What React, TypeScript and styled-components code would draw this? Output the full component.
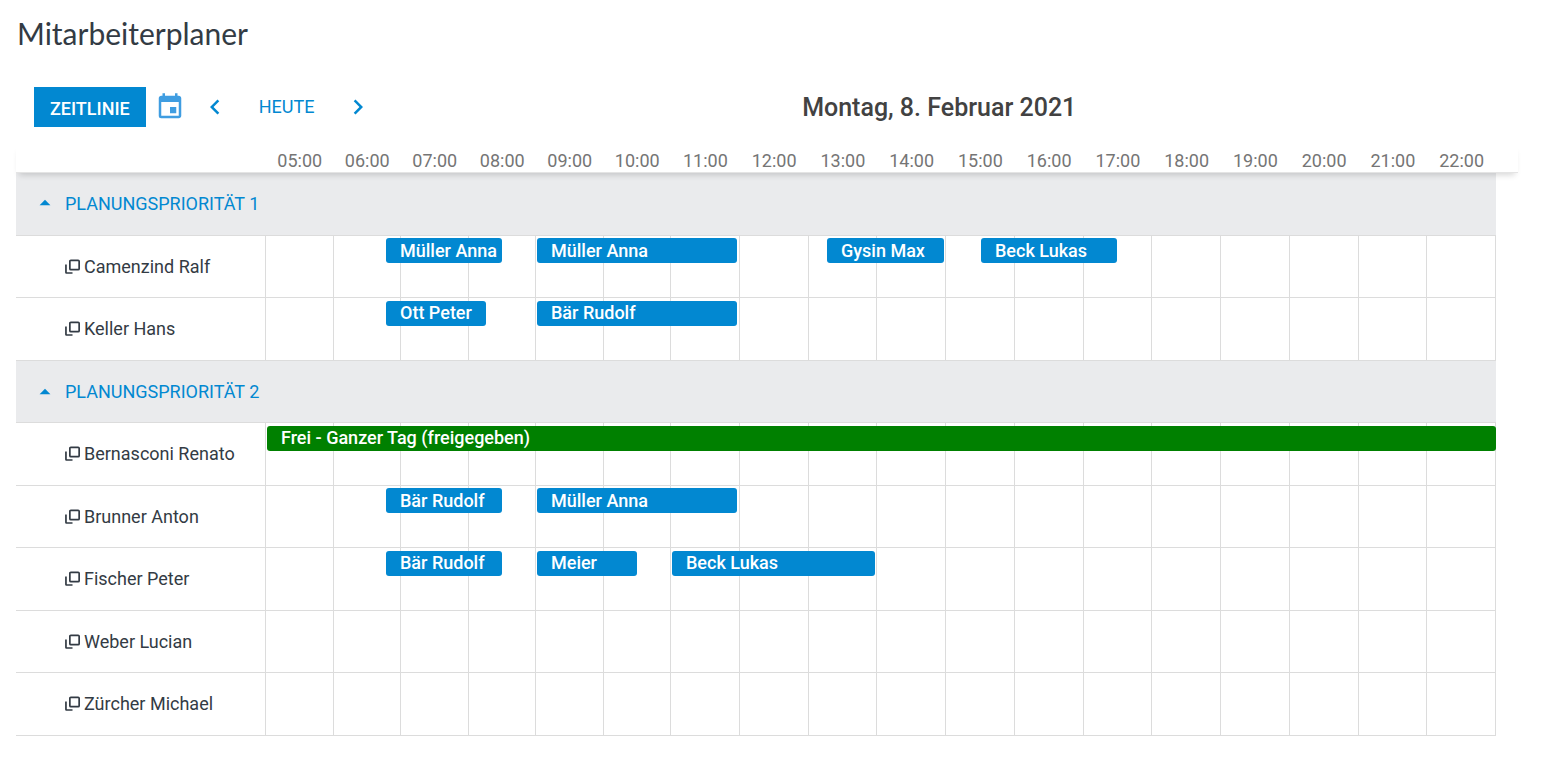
import React from 'react';
import styled, { createGlobalStyle } from 'styled-components';
import { MdEvent, MdChevronLeft, MdChevronRight, MdArrowDropUp } from 'react-icons/md';

const BLUE = '#0288d1';
const LINE = '#dcdcdc';

/* Events are placed on a track of this many units, drawn across all hours. */
const TRACK = 1230;

const GlobalStyle = createGlobalStyle`
  * { box-sizing: border-box; }
  body {
    margin: 0;
    background: #fff;
    color: #333b44;
    font-family: Roboto, "Liberation Sans", sans-serif;
    font-size: 18px;
  }
`;

const Page = styled.main`
  padding: 12px 23px 46px 16px;
`;

const Title = styled.h1`
  margin: 0;
  padding-left: 1px;
  font-family: Lato, "Open Sans", sans-serif;
  font-size: 30px;
  font-weight: 400;
  line-height: 42px;
`;

const Toolbar = styled.div`
  display: flex;
  align-items: center;
  padding: 33px 16px 17px 18px;
`;

const ViewButton = styled.button`
  height: 40px;
  padding: 3px 16px 0;
  border: 0;
  background: ${BLUE};
  color: #fff;
  font: 500 18px Roboto, sans-serif;
  cursor: pointer;
`;

const IconButton = styled.button<{ $tone?: string }>`
  display: flex;
  padding: 0;
  border: 0;
  background: none;
  color: ${(p) => p.$tone ?? BLUE};
  font-size: 30px;
  cursor: pointer;
`;

const Stepper = styled.div`
  display: flex;
  align-items: center;
  gap: 29px;
  margin: 0 3px 0 15px;
`;

const TodayButton = styled.button`
  padding: 0 0 2px;
  border: 0;
  background: none;
  color: ${BLUE};
  font: 400 18px Roboto, sans-serif;
  cursor: pointer;
`;

const PickerSlot = styled.div`
  padding-left: 9px;
`;

const DateHeading = styled.h2`
  flex: 1;
  margin: 0;
  padding-top: 2px;
  color: #424242;
  font-size: 25px;
  font-weight: 500;
  line-height: 38px;
  text-align: center;
`;

const Planner = styled.table`
  display: block;
  width: 100%;
`;

const Head = styled.thead`
  display: block;
  position: relative;
  z-index: 1;
  background: #fff;
  box-shadow: 0 5px 6px -3px rgba(0, 0, 0, 0.16);
`;

const columns = '250px repeat(6, 54fr) repeat(12, 55fr)';

const HeadRow = styled.tr`
  display: grid;
  grid-template-columns: ${columns} 22px;
  height: 29px;
  border-bottom: 1px solid #e4e4e4;
`;

const HourCell = styled.th`
  padding: 0;
  color: #757575;
  font-weight: 400;
  line-height: 34px;
  text-align: center;
`;

const Body = styled.tbody`
  display: block;
  margin-right: 22px;
`;

const Row = styled.tr`
  display: grid;
  grid-template-columns: ${columns};
  position: relative;
  height: 62px;
  --event-top: 2px;
  --event-line: 25px;

  &:nth-child(odd) {
    height: 63px;
    --event-top: 3px;
    --event-line: 23px;
  }

  &:nth-child(odd) > th {
    padding-bottom: 2px;
  }
`;

const GroupCell = styled.th`
  grid-column: 1 / -1;
  padding: 0 0 0 16px;
  border-bottom: 1px solid ${LINE};
  background: #eaebed;
  text-align: left;
`;

const GroupToggle = styled.button`
  display: flex;
  align-items: center;
  gap: 7px;
  height: 100%;
  padding: 0;
  border: 0;
  background: none;
  color: ${BLUE};
  font: 400 18px Roboto, sans-serif;
  cursor: pointer;

  svg { font-size: 26px; }
`;

const NameCell = styled.th`
  display: flex;
  align-items: center;
  gap: 4px;
  padding: 0 0 0 49px;
  border-right: 1px solid ${LINE};
  border-bottom: 1px solid ${LINE};
  font-weight: 400;
`;

const SlotCell = styled.td`
  padding: 0;
  border-right: 1px solid ${LINE};
  border-bottom: 1px solid ${LINE};
`;

const Track = styled.td`
  position: absolute;
  top: var(--event-top);
  right: 0;
  left: 250px;
  height: 25px;
  padding: 0;
`;

const Event = styled.div<{ $free?: boolean }>`
  position: absolute;
  height: 25px;
  padding-left: 14px;
  overflow: hidden;
  border-radius: 3px;
  background: ${(p) => (p.$free ? '#008000' : BLUE)};
  color: #fff;
  font-weight: 500;
  line-height: var(--event-line);
  white-space: nowrap;
`;

const CopyIcon = () => (
  <svg width="15" height="15" viewBox="0 0 15 15" fill="none" stroke="currentColor" strokeWidth="1.7" aria-hidden="true">
    <rect x="4.85" y="1.35" width="9.3" height="9.3" rx="1" />
    <path d="M0.95 5.5V13.6Q0.95 14 1.35 14H7.5" />
  </svg>
);

type Entry = { label: string; from: number; to: number; free?: boolean };
type Group = { name: string; people: { name: string; entries: Entry[] }[] };

const groups: Group[] = [
  {
    name: 'PLANUNGSPRIORITÄT 1',
    people: [
      {
        name: 'Camenzind Ralf',
        entries: [
          { label: 'Müller Anna', from: 120, to: 236 },
          { label: 'Müller Anna', from: 271, to: 471 },
          { label: 'Gysin Max', from: 561, to: 678 },
          { label: 'Beck Lukas', from: 715, to: 851 },
        ],
      },
      {
        name: 'Keller Hans',
        entries: [
          { label: 'Ott Peter', from: 120, to: 220 },
          { label: 'Bär Rudolf', from: 271, to: 471 },
        ],
      },
    ],
  },
  {
    name: 'PLANUNGSPRIORITÄT 2',
    people: [
      {
        name: 'Bernasconi Renato',
        entries: [{ label: 'Frei - Ganzer Tag (freigegeben)', from: 1, to: 1230, free: true }],
      },
      {
        name: 'Brunner Anton',
        entries: [
          { label: 'Bär Rudolf', from: 120, to: 236 },
          { label: 'Müller Anna', from: 271, to: 471 },
        ],
      },
      {
        name: 'Fischer Peter',
        entries: [
          { label: 'Bär Rudolf', from: 120, to: 236 },
          { label: 'Meier', from: 271, to: 371 },
          { label: 'Beck Lukas', from: 406, to: 609 },
        ],
      },
      { name: 'Weber Lucian', entries: [] },
      { name: 'Zürcher Michael', entries: [] },
    ],
  },
];

const hours = Array.from({ length: 18 }, (_, i) => `${String(i + 5).padStart(2, '0')}:00`);
const percent = (units: number) => `${(units / TRACK) * 100}%`;

export default function App() {
  return (
    <Page>
      <GlobalStyle />
      <Title>Mitarbeiterplaner</Title>
      <Toolbar>
        <ViewButton>ZEITLINIE</ViewButton>
        <PickerSlot>
          <IconButton $tone="#3f9de1" aria-label="Datum wählen"><MdEvent /></IconButton>
        </PickerSlot>
        <Stepper>
          <IconButton aria-label="Zurück"><MdChevronLeft /></IconButton>
          <TodayButton>HEUTE</TodayButton>
          <IconButton aria-label="Weiter"><MdChevronRight /></IconButton>
        </Stepper>
        <DateHeading>Montag, 8. Februar 2021</DateHeading>
      </Toolbar>
      <Planner>
        <Head>
          <HeadRow>
            <td />
            {hours.map((h) => <HourCell key={h} scope="col">{h}</HourCell>)}
          </HeadRow>
        </Head>
        <Body>
          {groups.map((group) => (
            <React.Fragment key={group.name}>
              <Row>
                <GroupCell scope="rowgroup">
                  <GroupToggle aria-expanded="true"><MdArrowDropUp />{group.name}</GroupToggle>
                </GroupCell>
              </Row>
              {group.people.map((person) => (
                <Row key={person.name}>
                  <NameCell scope="row"><CopyIcon />{person.name}</NameCell>
                  {hours.map((h) => <SlotCell key={h} />)}
                  <Track>
                    {person.entries.map((e) => (
                      <Event
                        key={e.from}
                        $free={e.free}
                        style={{ left: percent(e.from), width: percent(e.to - e.from) }}
                      >
                        {e.label}
                      </Event>
                    ))}
                  </Track>
                </Row>
              ))}
            </React.Fragment>
          ))}
        </Body>
      </Planner>
    </Page>
  );
}
